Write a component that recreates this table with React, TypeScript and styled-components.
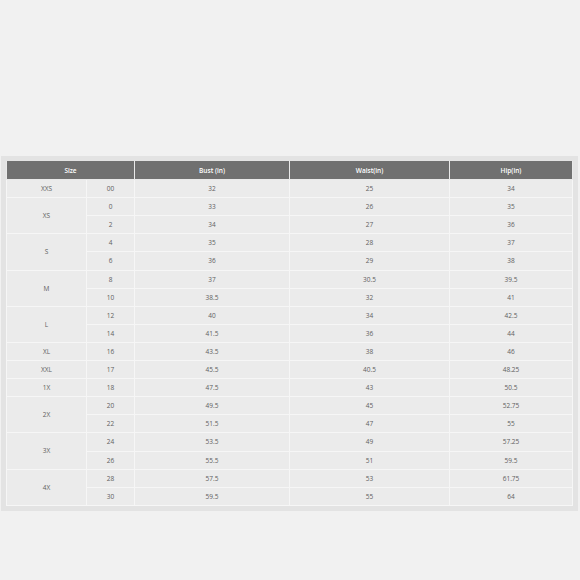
import styled, { createGlobalStyle } from 'styled-components'

const GlobalStyle = createGlobalStyle`
	html, body {
		margin: 0;
		padding: 0;
		background: #f1f1f1;
	}
	body {
		font-family: 'Open Sans', 'Liberation Sans', sans-serif;
	}
`

interface SizeGroup {
	label: string
	rows: string[][]
}

const groups: SizeGroup[] = [
	{ label: 'XXS', rows: [['00', '32', '25', '34']] },
	{ label: 'XS', rows: [['0', '33', '26', '35'], ['2', '34', '27', '36']] },
	{ label: 'S', rows: [['4', '35', '28', '37'], ['6', '36', '29', '38']] },
	{ label: 'M', rows: [['8', '37', '30.5', '39.5'], ['10', '38.5', '32', '41']] },
	{ label: 'L', rows: [['12', '40', '34', '42.5'], ['14', '41.5', '36', '44']] },
	{ label: 'XL', rows: [['16', '43.5', '38', '46']] },
	{ label: 'XXL', rows: [['17', '45.5', '40.5', '48.25']] },
	{ label: '1X', rows: [['18', '47.5', '43', '50.5']] },
	{ label: '2X', rows: [['20', '49.5', '45', '52.75'], ['22', '51.5', '47', '55']] },
	{ label: '3X', rows: [['24', '53.5', '49', '57.25'], ['26', '55.5', '51', '59.5']] },
	{ label: '4X', rows: [['28', '57.5', '53', '61.75'], ['30', '59.5', '55', '64']] }
]

const App = () => {
	return (
		<>
			<GlobalStyle />
			<Page>
				<Frame>
					<ChartTable>
						<colgroup>
							<col style={{ width: 80 }} />
							<col style={{ width: 48 }} />
							<col style={{ width: 155 }} />
							<col style={{ width: 160 }} />
							<col />
						</colgroup>
						<thead>
							<tr>
								<HeadCell colSpan={2}>Size</HeadCell>
								<HeadCell>Bust (in)</HeadCell>
								<HeadCell>Waist(in)</HeadCell>
								<HeadCell>Hip(in)</HeadCell>
							</tr>
						</thead>
						<tbody>
							{groups.map((g) =>
								g.rows.map((r, i) => (
									<Row key={g.label + r[0]}>
										{i === 0 && <Cell rowSpan={g.rows.length}>{g.label}</Cell>}
										{r.map((v, j) => (
											<Cell key={j}>{v}</Cell>
										))}
									</Row>
								))
							)}
						</tbody>
					</ChartTable>
				</Frame>
			</Page>
		</>
	)
}
export default App

const Page = styled.div`
	width: 580px;
	height: 580px;
	padding-top: 156px;
	box-sizing: border-box;
`
const Frame = styled.div`
	margin: 0 2px 0 1px;
	padding: 5px 5px 5px 5px;
	background: #e3e3e3;
`
const ChartTable = styled.table`
	width: 567px;
	border-collapse: collapse;
	table-layout: fixed;
	font-size: 6.5px;
	color: #606060;
`
const HeadCell = styled.th`
	height: 18px;
	padding: 0;
	background: #707070;
	color: #fff;
	font-weight: 600;
	text-align: center;
	border: 1px solid #e9e9e9;
	border-top: none;
`
const Row = styled.tr`
	height: 18px;
	&:nth-child(odd) {
		height: 18.2px;
	}
`
const Cell = styled.td`
	padding: 0;
	text-align: center;
	background: #ebebeb;
	border: 1px solid #f6f6f6;
`
